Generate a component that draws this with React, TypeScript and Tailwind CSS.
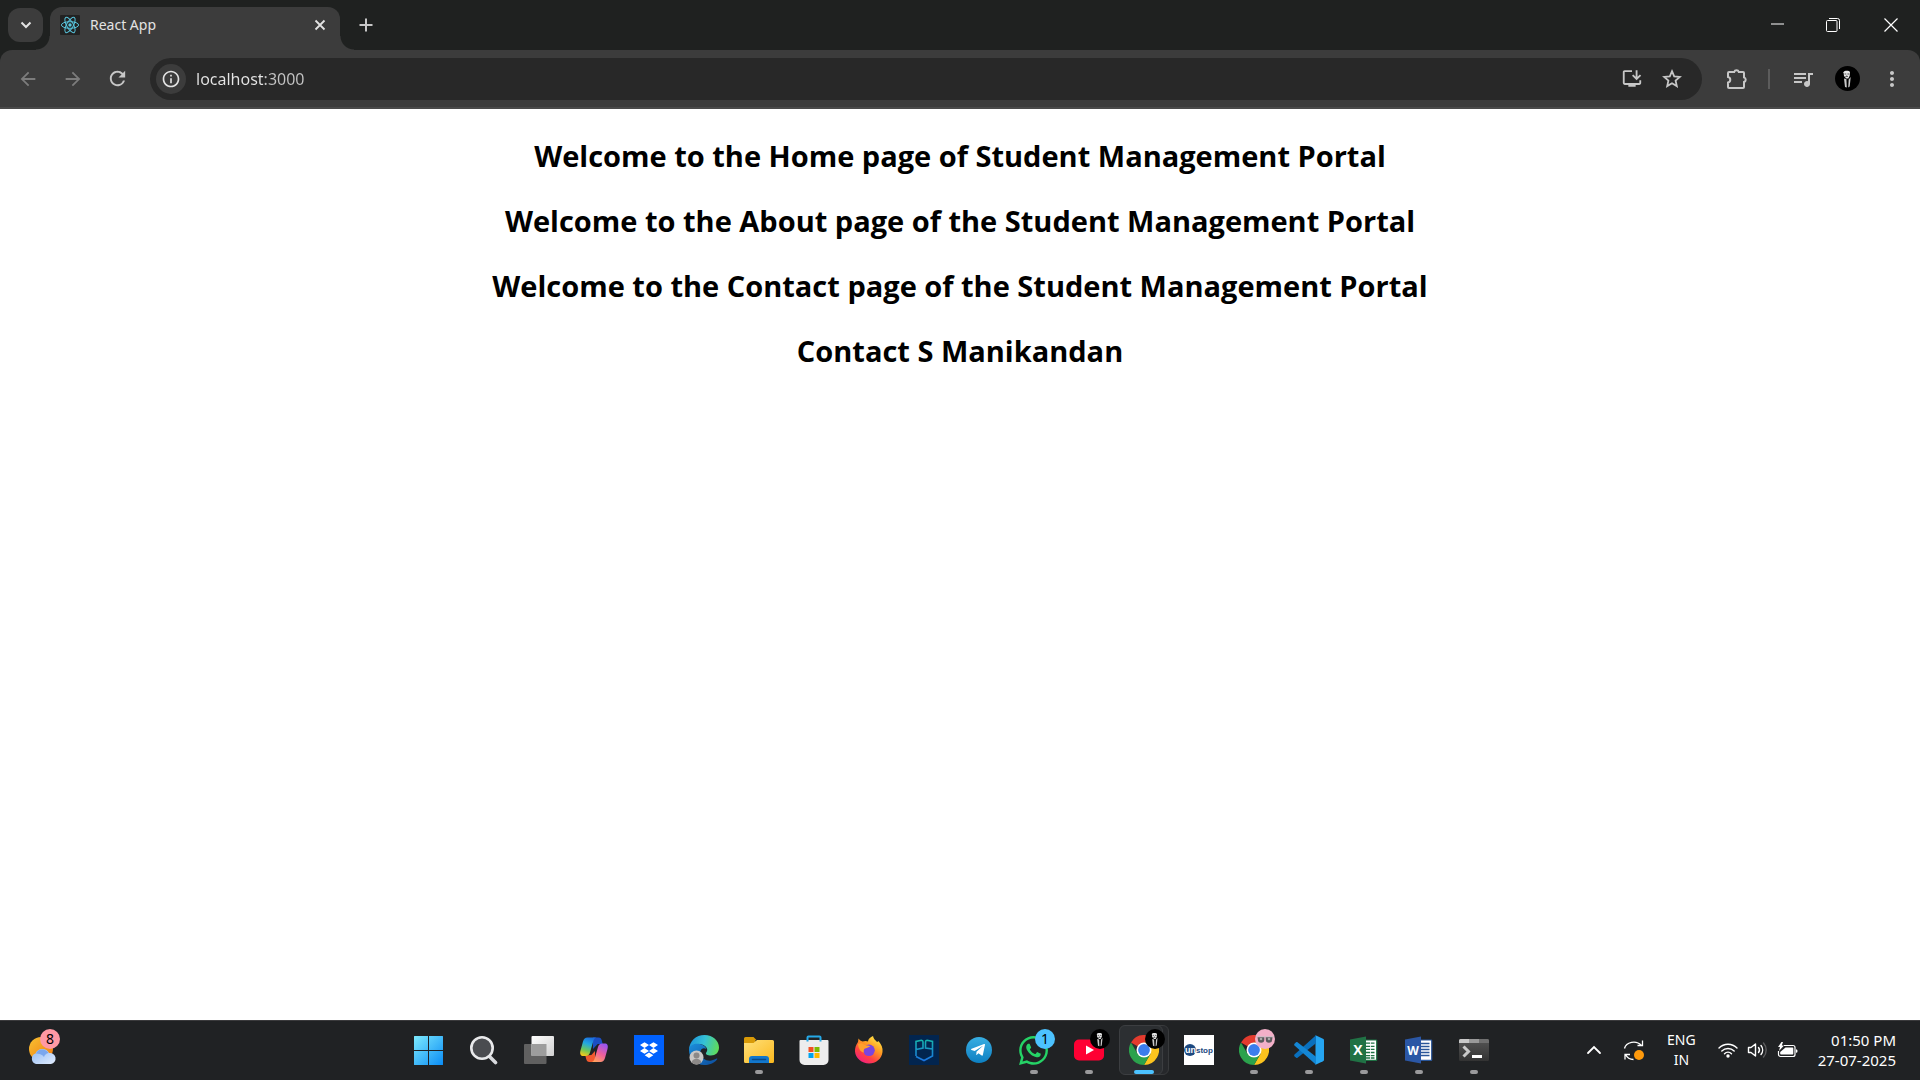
import type { ReactNode } from "react";
import {
  MdArrowBack,
  MdArrowForward,
  MdInfoOutline,
  MdMoreVert,
  MdOutlineInstallDesktop,
  MdQueueMusic,
  MdRefresh,
} from "react-icons/md";
import { FaTelegramPlane, FaWhatsapp } from "react-icons/fa";

const headings = [
  "Welcome to the Home page of Student Management Portal",
  "Welcome to the About page of the Student Management Portal",
  "Welcome to the Contact page of the Student Management Portal",
  "Contact S Manikandan",
];

function IconButton({ label, className = "", children }: { label: string; className?: string; children: ReactNode }) {
  return (
    <button type="button" aria-label={label} className={`flex shrink-0 items-center justify-center ${className}`}>
      {children}
    </button>
  );
}

/* ---------- browser chrome ---------- */

function ReactLogo() {
  return (
    <svg viewBox="0 0 20 20" className="size-5 shrink-0" fill="none" stroke="#58c4dc" strokeWidth="1">
      <rect width="20" height="20" rx="1" fill="#222222" stroke="none" />
      <ellipse cx="10" cy="10" rx="8.6" ry="3.3" />
      <ellipse cx="10" cy="10" rx="8.6" ry="3.3" transform="rotate(60 10 10)" />
      <ellipse cx="10" cy="10" rx="8.6" ry="3.3" transform="rotate(120 10 10)" />
      <circle cx="10" cy="10" r="1.7" fill="#58c4dc" stroke="none" />
    </svg>
  );
}

function PortraitAvatar({ className }: { className: string }) {
  return (
    <svg viewBox="0 0 25 25" className={className}>
      <circle cx="12.5" cy="12.5" r="12.5" fill="#000" />
      <path d="M8.500 6.200c.8-1.700 5.800-1.900 6.500 0l-.3 3.600-1.400 2.600h-2L9 10z" fill="#e8e8e8" />
      <path d="M9.500 8h1.800M12.400 8h1.800M10.500 10.500l1.200-.5 1.200.5" stroke="#111" strokeWidth=".7" />
      <path d="M9 12.500l2.400.500.4 8.500-1.800-.5zM15.700 11l-2 2.500-.5 8 1.500-1z" fill="#c8c8c8" />
    </svg>
  );
}

function TabStrip() {
  return (
    <header className="flex h-[50px] items-center pl-2 text-[#e3e3e3]">
      <IconButton label="Search tabs" className="h-[34px] w-[35px] rounded-xl bg-[#3c3c3c]">
        <svg viewBox="0 0 12 12" className="size-3" fill="none" stroke="currentColor" strokeWidth="2">
          <path d="M1.500 3.500L6 8l4.500-4.500" />
        </svg>
      </IconButton>
      <div className="relative ml-[7px] flex h-[43px] w-[290px] items-center self-end rounded-t-xl bg-[#3c3c3c] pr-[14px] pb-[7px] pl-[10px]">
        <span className="absolute bottom-0 -left-[14px] size-[14px] bg-[radial-gradient(circle_at_0_0,transparent_13px,#3c3c3c_14px)]" />
        <span className="absolute -right-[14px] bottom-0 size-[14px] bg-[radial-gradient(circle_at_100%_0,transparent_13px,#3c3c3c_14px)]" />
        <ReactLogo />
        <span className="ml-[10px] flex-1 text-sm">React App</span>
        <IconButton label="Close tab">
          <svg viewBox="0 0 12 12" className="size-3" stroke="currentColor" strokeWidth="1.800">
            <path d="M1.500 1.500l9 9M10.500 1.500l-9 9" />
          </svg>
        </IconButton>
      </div>
      <IconButton label="New tab" className="ml-[18px] size-4">
        <svg viewBox="0 0 14 14" className="size-[14px]" stroke="#c7c7c7" strokeWidth="2">
          <path d="M7 .5v13M.5 7h13" />
        </svg>
      </IconButton>
      <div className="ml-auto flex h-full text-white">
        <IconButton label="Minimize" className="w-14">
          <svg viewBox="0 0 13 13" className="size-[13px]" stroke="currentColor">
            <path d="M0 5h13" />
          </svg>
        </IconButton>
        <IconButton label="Restore" className="w-14">
          <svg viewBox="0 0 14 14" className="size-[14px]" fill="none" stroke="currentColor">
            <rect x=".5" y="2.500" width="10.500" height="11" rx="1" />
            <path d="M3 .5h8.500a2 2 0 0 1 2 2V11" />
          </svg>
        </IconButton>
        <IconButton label="Close" className="w-[59px]">
          <svg viewBox="0 0 14 14" className="size-[14px]" stroke="currentColor" strokeWidth="1.200">
            <path d="M.5.500l13 13M13.500.500l-13 13" />
          </svg>
        </IconButton>
      </div>
    </header>
  );
}

function PuzzleIcon() {
  return (
    <svg viewBox="0 0 22 22" className="size-[22px]">
      <path
        d="M3 4h5.200a2.400 2.400 0 0 1 4.600 0H17a1 1 0 0 1 1 1v4.400a2.400 2.400 0 0 1 0 4.600v5a1 1 0 0 1-1 1H3a1 1 0 0 1-1-1v-4.500a2.800 2.800 0 0 0 0-5.500V5a1 1 0 0 1 1-1z"
        fill="none"
        stroke="#c7c7c7"
        strokeWidth="2"
      />
    </svg>
  );
}

function Toolbar() {
  return (
    <div className="flex h-[59px] items-center rounded-t-xl border-b-2 border-[#4a4a4a] bg-[#3c3c3c] pr-4 pl-[17px] text-[#c7c7c7]">
      <IconButton label="Back" className="w-[22px] text-[#7c7c7c]">
        <MdArrowBack className="size-[22px]" />
      </IconButton>
      <IconButton label="Forward" className="ml-[23px] w-[22px] text-[#7c7c7c]">
        <MdArrowForward className="size-[22px]" />
      </IconButton>
      <IconButton label="Reload" className="ml-[22px] w-[23px]">
        <MdRefresh className="size-[23px]" />
      </IconButton>
      <div className="ml-[21px] flex h-[42px] flex-1 items-center rounded-full bg-[#282828] pr-[18px] pl-[6px]">
        <IconButton label="View site information" className="size-[30px] rounded-full bg-[#3c3c3c] text-[#e3e3e3]">
          <MdInfoOutline className="size-5" />
        </IconButton>
        <input
          type="text"
          aria-label="Address and search bar"
          defaultValue="localhost:3000"
          className="ml-[10px] min-w-0 flex-1 bg-[linear-gradient(90deg,#e6e6e6_68px,#c4c4c4_68px)] bg-clip-text text-base text-transparent outline-none"
        />
        <IconButton label="Install app" className="size-[22px]">
          <MdOutlineInstallDesktop className="size-[23px]" />
        </IconButton>
        <IconButton label="Bookmark this tab" className="ml-[17px] size-6">
          <svg viewBox="0 0 24 24" className="size-6" fill="none" stroke="currentColor" strokeWidth="1.800">
            <path d="M12 4.200l2.200 5.200 5.600.5-4.200 3.700 1.200 5.500-4.800-2.900-4.800 2.900 1.200-5.500-4.200-3.700 5.600-.5z" />
          </svg>
        </IconButton>
      </div>
      <IconButton label="Extensions" className="ml-6">
        <PuzzleIcon />
      </IconButton>
      <span className="ml-[20px] h-5 w-[2px] bg-[#5c5c5c]" />
      <IconButton label="Media controls" className="ml-[21px] size-6">
        <MdQueueMusic className="size-6" />
      </IconButton>
      <IconButton label="Profile" className="ml-5">
        <PortraitAvatar className="size-[25px]" />
      </IconButton>
      <IconButton label="Menu" className="ml-5 size-6">
        <MdMoreVert className="size-[26px]" />
      </IconButton>
    </div>
  );
}

/* ---------- taskbar icons, drawn on a 30px square ---------- */

function Svg({ children }: { children: ReactNode }) {
  return (
    <svg viewBox="0 0 30 30" className="size-[30px]">
      {children}
    </svg>
  );
}

const WindowsIcon = () => (
  <Svg>
    <defs>
      <linearGradient id="win" x1="0" y1="0" x2="1" y2="1">
        <stop offset="0" stopColor="#7deafd" />
        <stop offset="1" stopColor="#0a8cf5" />
      </linearGradient>
    </defs>
    <path d="M0 1.500a.5.5 0 0 1 .5-.5H14v14H0zM15 1h13.500a.5.5 0 0 1 .5.5V15H15zM0 16h14v14H.5a.5.5 0 0 1-.5-.5zM15 16h14v13.500a.5.5 0 0 1-.5.5H15z" fill="url(#win)" />
  </Svg>
);

const SearchIcon = () => (
  <Svg>
    <path d="M20.500 21.500l6 6" stroke="#d8dade" strokeWidth="3.600" strokeLinecap="round" />
    <circle cx="13" cy="13" r="10.700" fill="#4a4c50" stroke="#e8e9eb" strokeWidth="2.600" />
  </Svg>
);

const TaskViewIcon = () => (
  <Svg>
    <defs>
      <linearGradient id="tv" x1="0" y1="0" x2="1" y2="1">
        <stop offset="0" stopColor="#ffffff" />
        <stop offset="1" stopColor="#d0d0d0" />
      </linearGradient>
    </defs>
    <rect x="0" y="9" width="22.500" height="20" rx="1" fill="#606060" />
    <rect x="7.500" y="1" width="22.500" height="20" rx="1" fill="url(#tv)" />
    <path d="M7.500 9h15v12h-15z" fill="#9d9d9d" />
  </Svg>
);

const CopilotIcon = () => (
  <Svg>
    <defs>
      <linearGradient id="cpA" x1=".6" y1="0" x2=".3" y2="1">
        <stop offset="0" stopColor="#1c6fe0" />
        <stop offset=".35" stopColor="#22a8e0" />
        <stop offset=".7" stopColor="#6cc85a" />
        <stop offset="1" stopColor="#f3cb1c" />
      </linearGradient>
      <linearGradient id="cpB" x1=".7" y1="0" x2=".2" y2="1">
        <stop offset="0" stopColor="#9a55f0" />
        <stop offset=".5" stopColor="#ee5f9c" />
        <stop offset="1" stopColor="#ffa45c" />
      </linearGradient>
    </defs>
    <path d="M14 2.500h5.500c2 0 2.800 1.200 3.300 3l.9 3.500h-5L14 14z" fill="#1b4fc4" />
    <path d="M16 27h-5.500c-2 0-2.800-1.200-3.300-3l-.9-3.500 6-.5L16 16z" fill="#f0592e" />
    <path d="M8.500 2.500h9c-2.200.3-2.800 2-3.400 4.200L11 17.500c-.7 2.300-1.800 3.500-4.300 3.500H4.500C1.500 21 .6 19 1.500 15.500L4 6.500c.8-2.800 2.200-4 4.500-4z" fill="url(#cpA)" />
    <path d="M21.500 27h-9c2.200-.3 2.800-2 3.400-4.200L19 12c.7-2.300 1.800-3.500 4.300-3.500h2.200c3 0 3.900 2 3 5.500L26 23c-.8 2.800-2.200 4-4.500 4z" fill="url(#cpB)" />
  </Svg>
);

const DropboxIcon = () => (
  <Svg>
    <rect width="30" height="30" fill="#0061fe" />
    <path d="M10.500 7.200l4.500 2.900-4.500 2.900L6 10.100zM19.500 7.200l4.500 2.900-4.500 2.900-4.500-2.900zM10.500 13l4.500 2.900-4.500 2.900L6 15.900zM19.500 13l4.500 2.900-4.500 2.900-4.500-2.900zM15 17.500l4.300 2.700-4.300 2.900-4.300-2.900z" fill="#fff" />
  </Svg>
);

const EdgeIcon = () => (
  <Svg>
    <defs>
      <linearGradient id="edA" x1="0" y1=".3" x2="1" y2=".5">
        <stop offset="0" stopColor="#1c94dc" />
        <stop offset=".5" stopColor="#35c1d6" />
        <stop offset="1" stopColor="#5fdc5a" />
      </linearGradient>
      <linearGradient id="edB" x1="0" y1="0" x2="1" y2="1">
        <stop offset="0" stopColor="#1c8fdc" />
        <stop offset="1" stopColor="#0c4c9c" />
      </linearGradient>
    </defs>
    <path d="M0 14.500C.5 6 7 0 15.500 0 24 0 30 6 30 12.500c0 5-3.500 8-8 8-4 0-5.500-1.500-5-2.500 1.500-2 1.500-3.500.8-5C16 10 12 8.500 8.500 9 4.500 9.400 1.500 11.500 0 14.500z" fill="url(#edA)" />
    <path d="M0 15c0-4 4-6.500 8.500-6.300 4 .1 8 2 9 5.300-4-2.500-7 1-6 5 1 4.500 6 7.500 11 6.500 2-.4 4-1.500 5-2 .8-.3 1 .4.5 1C25 28.500 20 30 15.500 30 6.500 30 0 23.500 0 15z" fill="url(#edB)" />
    <circle cx="7.500" cy="22.500" r="7" fill="#c9c7c5" />
    <circle cx="7.500" cy="20.500" r="3" fill="#8c8987" />
    <path d="M2.700 27.500c.5-5 9-5 9.600 0a7 7 0 0 1-9.600 0z" fill="#8c8987" />
  </Svg>
);

const FolderIcon = () => (
  <Svg>
    <defs>
      <linearGradient id="fo" x1="0" y1="0" x2="1" y2="1">
        <stop offset="0" stopColor="#ffe07a" />
        <stop offset="1" stopColor="#fbb91e" />
      </linearGradient>
    </defs>
    <path d="M0 3.500A1.500 1.500 0 0 1 1.500 2h8l3 3h-1v6H0z" fill="#d99a07" />
    <path d="M0 8h9.500l3.500-3h15.500A1.500 1.500 0 0 1 30 6.500v20a1.500 1.500 0 0 1-1.500 1.500h-27A1.500 1.500 0 0 1 0 26.500z" fill="url(#fo)" />
    <path d="M5 28v-4a3 3 0 0 1 3-3h14a3 3 0 0 1 3 3v4z" fill="#1277cc" />
    <path d="M8.500 24.500h13" stroke="#0b4a86" strokeWidth="1.500" strokeLinecap="round" />
  </Svg>
);

const StoreIcon = () => (
  <Svg>
    <path d="M8.500 7V2.500a1 1 0 0 1 1-1h11a1 1 0 0 1 1 1V7" fill="none" stroke="#25a9e8" strokeWidth="2" />
    <path d="M.500 6a1 1 0 0 1 1-1h27a1 1 0 0 1 1 1v19a5 5 0 0 1-5 5h-19a5 5 0 0 1-5-5z" fill="#ededed" />
    <path d="M9.500 12h5v5h-5z" fill="#f25022" />
    <path d="M15.500 12h5v5h-5z" fill="#7fba00" />
    <path d="M9.500 18h5v5h-5z" fill="#00a4ef" />
    <path d="M15.500 18h5v5h-5z" fill="#ffb900" />
    <path d="M8.500 5v1.500M21.500 5v1.500" stroke="#25a9e8" strokeWidth="2" />
  </Svg>
);

const FirefoxIcon = () => (
  <Svg>
    <defs>
      <linearGradient id="ff" x1=".85" y1="0" x2=".2" y2="1">
        <stop offset="0" stopColor="#fff04a" />
        <stop offset=".4" stopColor="#ff9a22" />
        <stop offset=".7" stopColor="#ff4143" />
        <stop offset="1" stopColor="#f0198a" />
      </linearGradient>
    </defs>
    <path d="M19 1c.5 2.500 2 4 3.500 5.500.8.600 1.500.5 2-.5 3 3.500 4.500 7 4 11-.8 6.800-6.500 11.500-13.500 11.500S1.500 23.300 1 16.500C.8 13 2 10 4 7l.5-3.500C5.500 5 7 6 8.500 6.500 11 5.500 13 6 14 6.500 14 4 16.500 2 19 1z" fill="url(#ff)" />
    <circle cx="15" cy="15.300" r="5.800" fill="#7a45df" />
    <path d="M4 9c3-1.500 5-.5 6.500.800 1.500 1.200 4 .2 6 1.700-1.500 0-2.500 1.500-4.500 1.700-2.500.3-2.500 3-2 4.300C6 17 4.500 13 4 9z" fill="#ffa02c" />
  </Svg>
);

const PgIcon = () => (
  <Svg>
    <defs>
      <linearGradient id="pg" x1="0" y1="0" x2="0" y2="1">
        <stop offset="0" stopColor="#16b3ae" />
        <stop offset="1" stopColor="#1a74e0" />
      </linearGradient>
    </defs>
    <rect width="30" height="30" fill="#02254f" />
    <path d="M7 21V6.500l5.500-1.200c1 0 1.500.7 1.500 1.700v6L7 14.500M23.500 14L16.500 13V7c0-1 .5-1.700 1.500-1.700l5.500 1.200V21L15 25.500 7 21.500" fill="none" stroke="url(#pg)" strokeWidth="1.600" />
  </Svg>
);

const TelegramIcon = () => (
  <span className="flex size-[26px] items-center justify-center rounded-full bg-linear-to-b from-[#37aee2] to-[#0c80c2]">
    <FaTelegramPlane className="mr-[2px] size-4 text-white" />
  </span>
);

const WhatsAppIcon = () => <FaWhatsapp className="size-[33px] text-[#25d366]" />;

const YouTubeIcon = () => (
  <Svg>
    <rect x="0" y="4.500" width="30" height="21" rx="5" fill="#ff0033" />
    <path d="M12 10.500l8 4.500-8 4.500z" fill="#fff" />
  </Svg>
);

const ChromeIcon = () => (
  <Svg>
    <path d="M15 15L2 7.500A15 15 0 0 1 28 7.500H15z" fill="#e33b2e" />
    <path d="M15 7.500h13A15 15 0 0 1 15 30l6.500-11.200z" fill="#fcc31e" />
    <path d="M2 7.500L8.500 18.800 15 22.500l6.500-3.700L15 30A15 15 0 0 1 2 7.500z" fill="#2ba24c" />
    <circle cx="15" cy="15" r="7.500" fill="#fff" />
    <circle cx="15" cy="15" r="5.900" fill="#3b7ded" />
  </Svg>
);

const UnstopIcon = () => (
  <Svg>
    <rect width="30" height="30" fill="#fff" />
    <circle cx="6" cy="15" r="6" fill="#1c4980" />
    <text x="1" y="18" fontFamily="Liberation Sans, sans-serif" fontWeight="700" fontSize="9" fill="#fff">un</text>
    <text x="12" y="18" fontFamily="Liberation Sans, sans-serif" fontWeight="700" fontSize="8" fill="#1c4980">stop</text>
  </Svg>
);

const CodeIcon = () => (
  <Svg>
    <path d="M21.500.300L29 3.700c.6.300 1 .8 1 1.500v19.600c0 .7-.4 1.200-1 1.500l-7.500 3.400z" fill="#25a5f1" />
    <path d="M22 .200v8L3.500 22.700c-.4.300-.9.300-1.300 0l-1.700-1.500c-.5-.5-.5-1.200 0-1.700z" fill="#0a70bd" />
    <path d="M22 29.800v-8L3.500 7.300c-.4-.3-.9-.3-1.300 0L.5 8.800c-.5.500-.5 1.200 0 1.700z" fill="#1486d4" />
  </Svg>
);

const ExcelIcon = () => (
  <Svg>
    <path d="M15 5h12a.7.700 0 0 1 .7.700v19a.7.700 0 0 1-.7.700H15z" fill="#fff" stroke="#1f7244" strokeWidth="1.200" />
    <path d="M17 8.200h8.500M17 11.300h8.500M17 14.400h8.500M17 17.500h8.500M17 20.600h8.500M17 23h8.500" stroke="#1f7244" strokeWidth="1.300" strokeDasharray="4 .8" />
    <path d="M1 4.500L17 1.500v27L1 25.500z" fill="#207245" />
    <text x="9" y="20" textAnchor="middle" fontFamily="Open Sans, sans-serif" fontWeight="700" fontSize="14" fill="#fff">X</text>
  </Svg>
);

const WordIcon = () => (
  <Svg>
    <path d="M15 5h12a.7.700 0 0 1 .7.700v19a.7.700 0 0 1-.7.700H15z" fill="#fff" stroke="#2a5699" strokeWidth="1.200" />
    <path d="M17 8.500h8.500M17 11.500h8.500M17 14.500h8.500M17 17.500h8.500M17 20.500h8.500" stroke="#2a5699" strokeWidth="1.300" />
    <path d="M1 4.500L17 1.500v27L1 25.500z" fill="#2b57a5" />
    <text x="9" y="19.500" textAnchor="middle" fontFamily="Open Sans, sans-serif" fontWeight="700" fontSize="12" fill="#fff">W</text>
  </Svg>
);

const TerminalIcon = () => (
  <Svg>
    <defs>
      <linearGradient id="te" x1="0" y1="0" x2="0" y2="1">
        <stop offset="0" stopColor="#555" />
        <stop offset="1" stopColor="#333" />
      </linearGradient>
    </defs>
    <rect y="4" width="30" height="22" rx="1.500" fill="url(#te)" />
    <path d="M1.500 4H10v4H0V5.500A1.500 1.500 0 0 1 1.500 4z" fill="#c8c8c8" />
    <path d="M10 4h10v4H10z" fill="#999" />
    <path d="M20 4h8.500A1.500 1.500 0 0 1 30 5.500V8H20z" fill="#6f6f6f" />
    <path d="M4.500 11.500l5 5-5 5" fill="none" stroke="#c9c9c9" strokeWidth="3" />
    <path d="M13 21.500h10" stroke="#fff" strokeWidth="3" />
  </Svg>
);

const GlassesAvatar = () => (
  <svg viewBox="0 0 20 20" className="size-5">
    <circle cx="10" cy="10" r="10" fill="#f2b0c8" />
    <path d="M2.500 8h6.800v2.500a3.200 3.200 0 0 1-6.400 0zM10.700 8h6.800l-.3 2.500a3.200 3.200 0 0 1-6.400 0z" fill="#5a5a5c" />
    <path d="M1 7.800h18" stroke="#c9bfc6" />
    <circle cx="6" cy="10" r="1.300" fill="#aaa" />
    <circle cx="14" cy="10" r="1.300" fill="#aaa" />
  </svg>
);

type TaskbarApp = { name: string; icon: ReactNode; running?: boolean; active?: boolean; badge?: ReactNode };

const apps: TaskbarApp[] = [
  { name: "Start", icon: <WindowsIcon /> },
  { name: "Search", icon: <SearchIcon /> },
  { name: "Task View", icon: <TaskViewIcon /> },
  { name: "Copilot", icon: <CopilotIcon /> },
  { name: "Dropbox", icon: <DropboxIcon /> },
  { name: "Edge", icon: <EdgeIcon /> },
  { name: "File Explorer", icon: <FolderIcon />, running: true },
  { name: "Store", icon: <StoreIcon /> },
  { name: "Firefox", icon: <FirefoxIcon /> },
  { name: "PG", icon: <PgIcon /> },
  { name: "Telegram", icon: <TelegramIcon /> },
  {
    name: "WhatsApp",
    icon: <WhatsAppIcon />,
    running: true,
    badge: (
      <span className="flex size-5 items-center justify-center rounded-full bg-[#4cc2ff] text-sm text-black">1</span>
    ),
  },
  { name: "YouTube", icon: <YouTubeIcon />, running: true, badge: <PortraitAvatar className="size-5" /> },
  { name: "Chrome", icon: <ChromeIcon />, active: true, badge: <PortraitAvatar className="size-5" /> },
  { name: "Unstop", icon: <UnstopIcon /> },
  { name: "Chrome, second profile", icon: <ChromeIcon />, running: true, badge: <GlassesAvatar /> },
  { name: "Visual Studio Code", icon: <CodeIcon />, running: true },
  { name: "Excel", icon: <ExcelIcon />, running: true },
  { name: "Word", icon: <WordIcon />, running: true },
  { name: "Terminal", icon: <TerminalIcon />, running: true },
];

function TaskbarButton({ app }: { app: TaskbarApp }) {
  return (
    <button type="button" aria-label={app.name} className="relative flex h-[58px] w-[55px] items-center justify-center">
      {app.active && (
        <>
          <span className="absolute inset-y-1 right-[2px] left-[10px] rounded-md border border-[#383a3c] bg-[#26282b]" />
          <span className="absolute inset-y-1 right-2 left-[3px] rounded-md border border-[#3c3e41] bg-[#2c2f32]" />
        </>
      )}
      <span className="relative">{app.icon}</span>
      {app.badge && <span className="absolute top-2 right-[6px]">{app.badge}</span>}
      {app.running && <span className="absolute bottom-[5px] h-1 w-2 rounded-full bg-[#9a9a9c]" />}
      {app.active && <span className="absolute bottom-[5px] h-1 w-5 rounded-full bg-[#4cc2ff]" />}
    </button>
  );
}

function WeatherIcon() {
  return (
    <svg viewBox="0 0 30 30" className="size-[30px]">
      <defs>
        <linearGradient id="sun" x1="0" y1="0" x2="1" y2="1">
          <stop offset="0" stopColor="#f8c232" />
          <stop offset="1" stopColor="#f07a10" />
        </linearGradient>
        <linearGradient id="cloud" x1="0" y1="0" x2="1" y2="1">
          <stop offset="0" stopColor="#8fb9f5" />
          <stop offset="1" stopColor="#e2edfd" />
        </linearGradient>
      </defs>
      <circle cx="13" cy="14" r="12" fill="url(#sun)" />
      <path d="M8 29a5.500 5.500 0 0 1-.5-10.500A7.500 7.500 0 0 1 21 18a5.500 5.500 0 0 1 2 11z" fill="url(#cloud)" />
      <path d="M8 18.500a7 7 0 0 1 12.500-.5c-2.500.5-4 2-4.500 4-2-3-5-3.500-8-3.500z" fill="#7ba7ee" />
    </svg>
  );
}

function SystemTray() {
  return (
    <div className="flex items-center justify-end pr-6 text-white">
      <IconButton label="Show hidden icons" className="w-4">
        <svg viewBox="0 0 16 10" className="w-4" fill="none" stroke="currentColor" strokeWidth="1.800" strokeLinecap="round">
          <path d="M2 8l6-6 6 6" />
        </svg>
      </IconButton>
      <IconButton label="Updates" className="ml-[21px]">
        <svg viewBox="0 0 22 22" className="size-[22px]" fill="none" stroke="currentColor" strokeWidth="1.300">
          <path d="M1.500 9.500C3 3 13 .500 18.500 6.500M19.500 1.500v5h-5M10.500 20.500C7 20.500 4 18.500 2.500 15.500M2 20.500v-5h5" />
          <circle cx="16" cy="16" r="5" fill="#ff9a0c" stroke="none" />
        </svg>
      </IconButton>
      <button type="button" className="ml-[22px] text-center text-sm leading-5">
        ENG
        <br />
        IN
      </button>
      <button type="button" aria-label="Network, sound and battery" className="ml-[22px] flex items-center gap-[9px]">
        <svg viewBox="0 0 20 16" className="w-5" fill="none" stroke="currentColor" strokeWidth="1.400" strokeLinecap="round">
          <path d="M1 6a12.700 12.700 0 0 1 18 0M3.800 9a8.800 8.800 0 0 1 12.400 0M6.500 11.700a5 5 0 0 1 7 0" />
          <circle cx="10" cy="14" r="1.700" fill="currentColor" stroke="none" />
        </svg>
        <svg viewBox="0 0 21 18" className="w-[21px]" fill="none" stroke="currentColor" strokeWidth="1.400" strokeLinecap="round" strokeLinejoin="round">
          <path d="M1.500 6.500H4L8.500 3v12L4 11.500H1.500z" />
          <path d="M11.500 6.500a4 4 0 0 1 0 5M14 4.500a7 7 0 0 1 0 9" />
          <path d="M16.500 2a10.500 10.500 0 0 1 0 14" stroke="#5c5c5e" />
        </svg>
        <svg viewBox="0 0 21 18" className="w-[21px]">
          <path d="M7 4.500h9A2 2 0 0 1 18 6.500v7a2 2 0 0 1-2 2H3.500a2 2 0 0 1-2-2V10" fill="none" stroke="#fff" strokeWidth="1.200" />
          <path d="M8.500 6.500h7a.8.800 0 0 1 .8.800v5.400a.8.800 0 0 1-.8.800H4a.8.800 0 0 1-.8-.8V11zM19 8.200a1.500 1.500 0 0 1 1.500 1.500v.6A1.500 1.500 0 0 1 19 11.800zM4.500 1L1 6h2l-1 4 5-5.500H4.800L6 1z" fill="#fff" />
        </svg>
      </button>
      <button type="button" className="ml-5 text-right text-[15px] leading-5">
        01:50 PM
        <br />
        27-07-2025
      </button>
    </div>
  );
}

function Taskbar() {
  return (
    <footer className="grid h-[60px] grid-cols-[1fr_auto_1fr] border-t border-[#3a3a3c] bg-[#202224] pb-px">
      <div className="flex items-center pl-7">
        <button type="button" aria-label="Widgets" className="relative">
          <WeatherIcon />
          <span className="absolute -top-[6px] left-3 flex size-5 items-center justify-center rounded-full bg-[#ff99a4] text-sm text-black">
            8
          </span>
        </button>
      </div>
      <nav aria-label="Taskbar" className="mr-[18px] flex">
        {apps.map((app) => (
          <TaskbarButton key={app.name} app={app} />
        ))}
      </nav>
      <SystemTray />
    </footer>
  );
}

export default function App() {
  return (
    <div className="flex min-h-screen flex-col bg-[#1f2120] font-['Noto_Sans','Open_Sans',sans-serif]">
      <TabStrip />
      <Toolbar />
      <main className="flex flex-1 flex-col gap-[22px] bg-white pt-[25px] text-center font-['Open_Sans',sans-serif] text-[29px] leading-[43px] font-bold text-black">
        {headings.map((heading) => (
          <h1 key={heading}>{heading}</h1>
        ))}
      </main>
      <Taskbar />
    </div>
  );
}
